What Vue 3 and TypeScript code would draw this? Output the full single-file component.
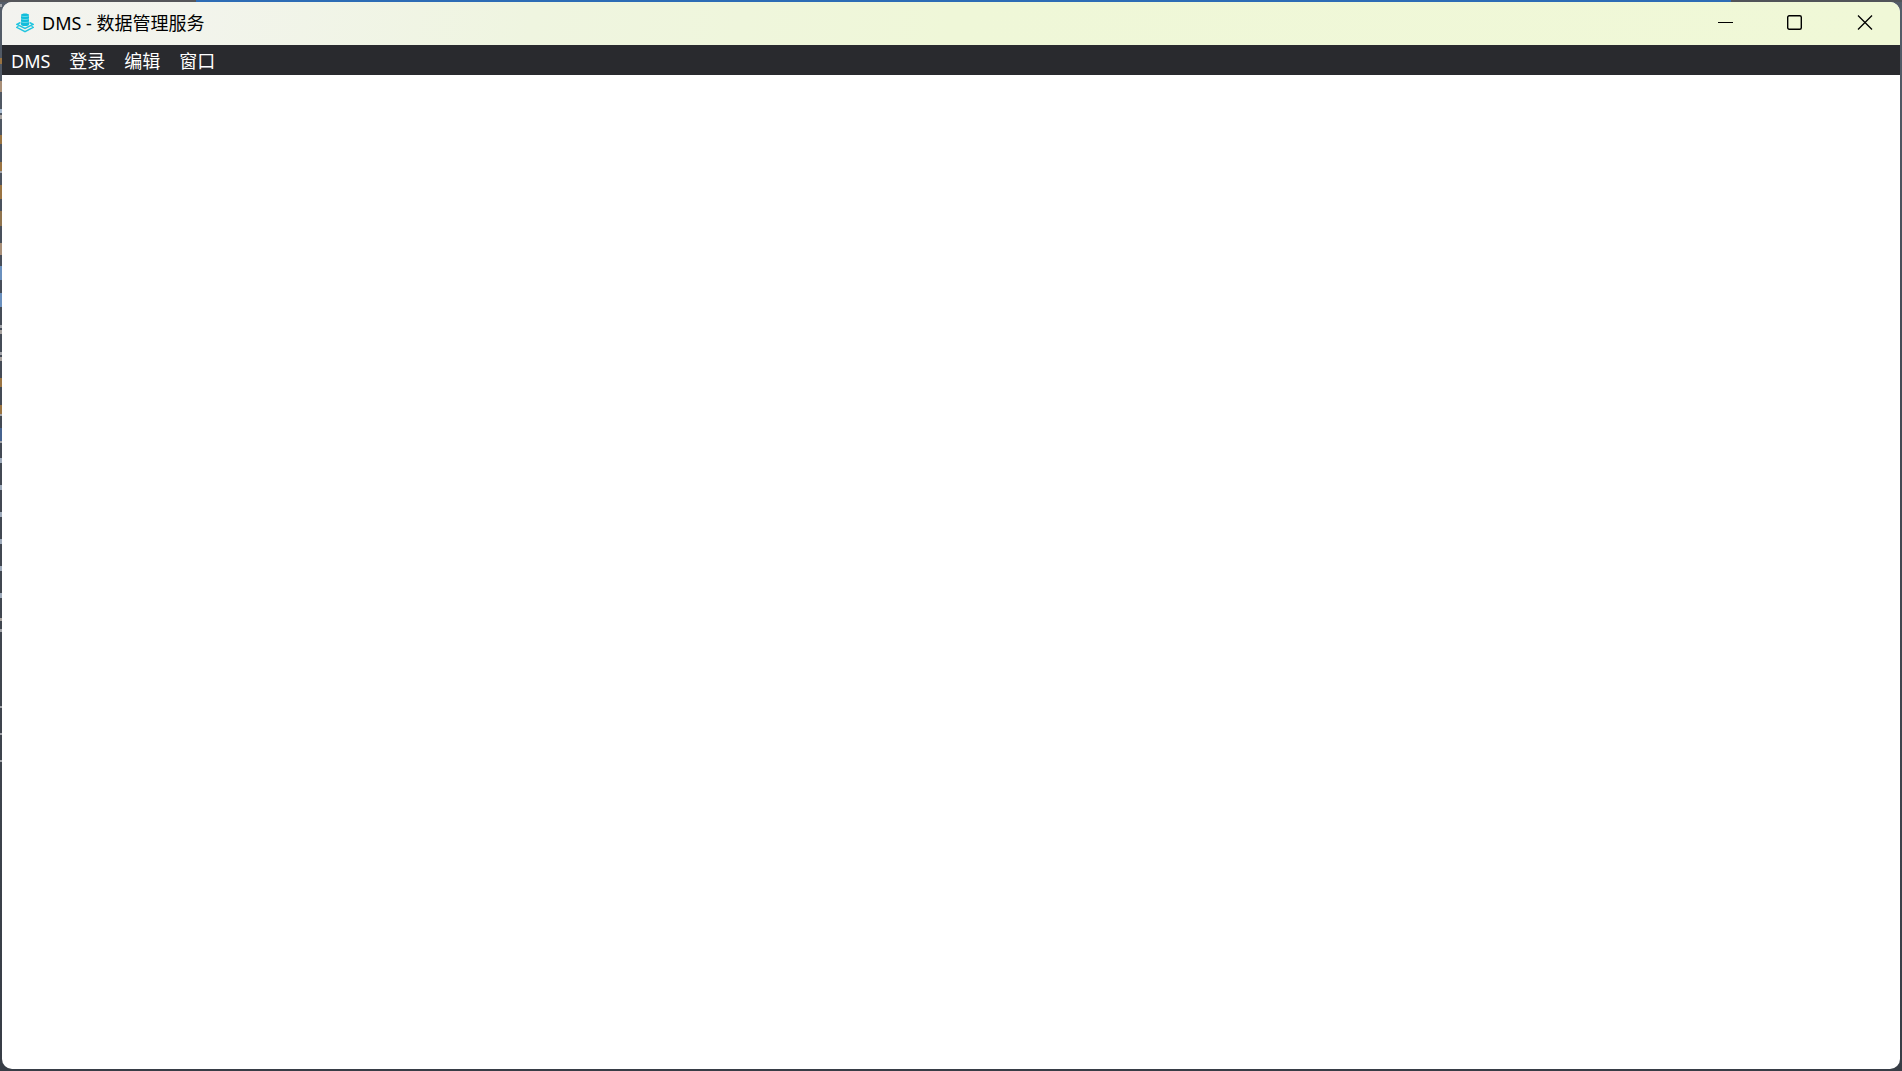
<script setup lang="ts">
interface EdgeMark {
  y: number
  height: number
  color: string
}

const menus: string[] = ['DMS', '登录', '编辑', '窗口']

const edgeMarks: EdgeMark[] = [
  { y: 4, height: 3, color: '#a3a5aa' },
  { y: 58, height: 6, color: '#9a7442' },
  { y: 81, height: 11, color: '#a88f78' },
  { y: 109, height: 4, color: '#a9bbd0' },
  { y: 115, height: 4, color: '#a8a3a0' },
  { y: 135, height: 9, color: '#9a7442' },
  { y: 162, height: 9, color: '#9a7442' },
  { y: 171, height: 2, color: '#a3a5aa' },
  { y: 185, height: 14, color: '#9a7442' },
  { y: 211, height: 15, color: '#8f744e' },
  { y: 243, height: 12, color: '#a88f78' },
  { y: 266, height: 14, color: '#6a90be' },
  { y: 293, height: 14, color: '#6a90be' },
  { y: 325, height: 3, color: '#a3a5aa' },
  { y: 330, height: 4, color: '#a8a3a0' },
  { y: 352, height: 3, color: '#a3a5aa' },
  { y: 357, height: 4, color: '#a8a3a0' },
  { y: 378, height: 9, color: '#9a7442' },
  { y: 405, height: 9, color: '#9a7442' },
  { y: 414, height: 2, color: '#a3a5aa' },
  { y: 428, height: 14, color: '#46638f' },
  { y: 441, height: 2, color: '#a3a5aa' },
  { y: 458, height: 5, color: '#9eaaba' },
  { y: 485, height: 5, color: '#9eaaba' },
  { y: 512, height: 5, color: '#9eaaba' },
  { y: 539, height: 5, color: '#9eaaba' },
  { y: 566, height: 5, color: '#9eaaba' },
  { y: 593, height: 5, color: '#9eaaba' },
  { y: 618, height: 3, color: '#a8a3a0' },
  { y: 629, height: 3, color: '#a3a5aa' },
  { y: 706, height: 2, color: '#a3a5aa' },
  { y: 733, height: 2, color: '#a3a5aa' },
  { y: 760, height: 2, color: '#a3a5aa' },
]
</script>

<template>
  <div class="desktop">
    <svg class="edge" width="2" height="800" aria-hidden="true">
      <rect
        v-for="mark in edgeMarks"
        :key="mark.y"
        x="0"
        :y="mark.y"
        width="2"
        :height="mark.height"
        :fill="mark.color"
      />
    </svg>
    <div class="window">
      <header class="titlebar">
        <svg class="logo" viewBox="0 0 18 20" width="18" height="20" aria-hidden="true">
          <path d="M4.500 9.500 1 11.300 9 15.300 17 11.300 13.500 9.500" fill="none" stroke="#22c5df" stroke-width="1.500" />
          <path d="M2.500 13.300 0.800 14.300 9 18.700 17.200 14.300 15.500 13.300" fill="none" stroke="#22c5df" stroke-width="1.500" />
          <path d="M5 2c0-2 8-2 8 0v9.500c0 2-8 2-8 0z" fill="#12bddb" />
          <path d="M5 2.800c1 1 7 1 8 0M5 5.800c1 1 7 1 8 0M5 8.800c1 1 7 1 8 0" fill="none" stroke="#7cdeea" stroke-width="0.800" />
        </svg>
        <h1 class="title">DMS - 数据管理服务</h1>
        <div class="controls">
          <button type="button" aria-label="最小化">
            <svg viewBox="0 0 16 16" width="16" height="16">
              <path d="M1 7.500H16" />
            </svg>
          </button>
          <button type="button" aria-label="最大化">
            <svg viewBox="0 0 16 16" width="16" height="16">
              <rect x="0.700" y="0.700" width="13.600" height="13.600" rx="1.500" stroke-width="1.400" />
            </svg>
          </button>
          <button type="button" aria-label="关闭">
            <svg viewBox="0 0 16 16" width="16" height="16">
              <path d="M1 0.500 15 14.500M15 0.500 1 14.500" stroke-width="1.300" />
            </svg>
          </button>
        </div>
      </header>
      <nav class="menubar" aria-label="菜单">
        <button v-for="menu in menus" :key="menu" type="button">{{ menu }}</button>
      </nav>
      <main class="content"></main>
    </div>
  </div>
</template>

<style>
body {
  margin: 0;
}
</style>

<style scoped>
.desktop {
  position: relative;
  display: flex;
  box-sizing: border-box;
  min-height: 100vh;
  padding: 2px;
  background:
    linear-gradient(90deg, #55565a 0 10.300%, #2d6cb5 10.300% 91%, #515459 91%) top / 100% 2px no-repeat,
    linear-gradient(#545d69, #454c57 30%, #40464f 60%, #373d46);
  font-family: 'Noto Sans', 'Noto Sans CJK SC', sans-serif;
}

.edge {
  position: absolute;
  top: 0;
  left: 0;
}

.window {
  position: relative;
  display: flex;
  flex: 1;
  flex-direction: column;
  overflow: hidden;
  border-radius: 10px;
  background: #fff;
}

.titlebar {
  display: flex;
  align-items: center;
  box-sizing: border-box;
  height: 43px;
  padding: 0 0 2px 14px;
  background: linear-gradient(100deg, #f3f3ef 0%, #f2f4ec 10%, #eff5e0 28%, #eff7d8 50%, #f0f8d7 100%);
}

.logo {
  flex: none;
}

.title {
  flex: 1;
  margin: 0 0 0 8px;
  color: #000;
  font-size: 18px;
  font-weight: 400;
  line-height: 24px;
}

.controls {
  display: flex;
  align-self: stretch;
}

.controls button {
  display: flex;
  align-items: center;
  justify-content: center;
  width: 70px;
  padding: 0;
  border: 0;
  background: none;
}

.controls svg {
  fill: none;
  stroke: #000;
}

.menubar {
  display: flex;
  height: 30px;
  background: #292a2e;
}

.menubar button {
  padding: 2px 10px 0 9px;
  border: 0;
  background: none;
  color: #fff;
  font-family: inherit;
  font-size: 18px;
  line-height: 28px;
}

.content {
  flex: 1;
}
</style>
